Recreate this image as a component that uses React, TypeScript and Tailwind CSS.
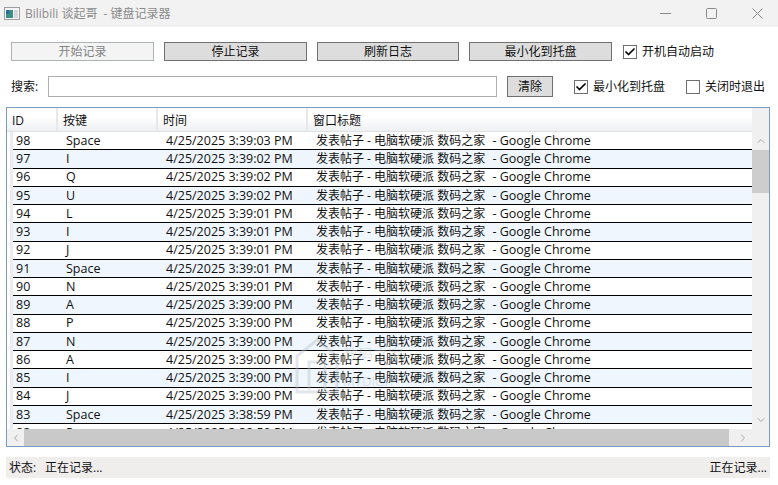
import { Check, ChevronDown, ChevronLeft, ChevronRight, ChevronUp } from 'lucide-react';

const uiFont = "font-['Open_Sans','Noto_Sans_CJK_SC',sans-serif]";

const rows = [
  { id: 98, key: 'Space', time: '4/25/2025 3:39:03 PM' },
  { id: 97, key: 'I', time: '4/25/2025 3:39:02 PM' },
  { id: 96, key: 'Q', time: '4/25/2025 3:39:02 PM' },
  { id: 95, key: 'U', time: '4/25/2025 3:39:02 PM' },
  { id: 94, key: 'L', time: '4/25/2025 3:39:01 PM' },
  { id: 93, key: 'I', time: '4/25/2025 3:39:01 PM' },
  { id: 92, key: 'J', time: '4/25/2025 3:39:01 PM' },
  { id: 91, key: 'Space', time: '4/25/2025 3:39:01 PM' },
  { id: 90, key: 'N', time: '4/25/2025 3:39:01 PM' },
  { id: 89, key: 'A', time: '4/25/2025 3:39:00 PM' },
  { id: 88, key: 'P', time: '4/25/2025 3:39:00 PM' },
  { id: 87, key: 'N', time: '4/25/2025 3:39:00 PM' },
  { id: 86, key: 'A', time: '4/25/2025 3:39:00 PM' },
  { id: 85, key: 'I', time: '4/25/2025 3:39:00 PM' },
  { id: 84, key: 'J', time: '4/25/2025 3:39:00 PM' },
  { id: 83, key: 'Space', time: '4/25/2025 3:38:59 PM' },
  { id: 82, key: 'P', time: '4/25/2025 3:38:59 PM' },
];

const ToolButton = ({ label, disabled, width }: { label: string; disabled?: boolean; width: string }) => (
  <button
    className={
      disabled
        ? `h-[19px] border border-[#adb2b5] bg-[#f4f4f4] text-[#838383] ${width}`
        : `h-[19px] border border-[#707070] bg-[#dddddd] text-[#111] ${width}`
    }
  >
    {label}
  </button>
);

const CheckItem = ({ label, checked }: { label: string; checked?: boolean }) => (
  <div className="flex items-center gap-[5px]">
    <span className="flex h-[14px] w-[14px] items-center justify-center border border-[#707070] bg-white">
      {checked && <Check className="h-[12px] w-[12px] text-black" strokeWidth={3.5} />}
    </span>
    <span>{label}</span>
  </div>
);

const HeaderCell = ({ label, width }: { label: string; width: string }) => (
  <div className={`flex h-full items-center border-r-2 border-[#e6e8ea] pt-[2px] pl-[5px] ${width}`}>{label}</div>
);

export default function App() {
  return (
    <div className={`flex h-[485px] w-[778px] flex-col overflow-hidden bg-white text-[12px] text-[#111] ${uiFont}`}>
      {/* Title bar */}
      <header className="flex h-[27px] shrink-0 items-center bg-[#f2f2f2] pl-[4px]">
        <svg width="16" height="13" viewBox="0 0 16 13" className="shrink-0">
          <rect x="0.5" y="0.5" width="15" height="12" fill="#f5f5f5" stroke="#9aa0a4" />
          <rect x="2" y="3" width="7" height="8" fill="#3c8f86" />
          <rect x="2" y="3" width="3" height="4" fill="#2f6a9a" />
          <rect x="10" y="3" width="4" height="8" fill="#d5d8da" />
        </svg>
        <span className="ml-[5px] text-[#8a8a8a]">Bilibili 谈起哥&nbsp; - 键盘记录器</span>
        <div className="ml-auto mr-[15px] flex items-center gap-[35px] text-[#8a8a8a]">
          <svg width="11" height="11" viewBox="0 0 11 11" fill="none" stroke="currentColor">
            <path d="M0 5.5H11" />
          </svg>
          <svg width="11" height="11" viewBox="0 0 11 11" fill="none" stroke="currentColor">
            <rect x="0.5" y="0.5" width="10" height="10" rx="1" />
          </svg>
          <svg width="11" height="11" viewBox="0 0 11 11" fill="none" stroke="currentColor">
            <path d="M0.5 0.5L10.5 10.5M10.5 0.5L0.5 10.5" />
          </svg>
        </div>
      </header>

      {/* Toolbar */}
      <div className="mt-[15px] flex h-[19px] shrink-0 items-center pl-[11px]">
        <div className="flex gap-[10px]">
          <ToolButton label="开始记录" width="w-[143px]" disabled />
          <ToolButton label="停止记录" width="w-[143px]" />
          <ToolButton label="刷新日志" width="w-[142px]" />
          <ToolButton label="最小化到托盘" width="w-[143px]" />
        </div>
        <div className="ml-[11px]">
          <CheckItem label="开机自动启动" checked />
        </div>
      </div>

      {/* Search */}
      <div className="mt-[15px] flex h-[21px] shrink-0 items-center pl-[11px]">
        <span className="w-[37px]">搜索:</span>
        <input className="h-full w-[449px] border border-[#abadb3] bg-white" />
        <button className="ml-[10px] h-full w-[46px] border border-[#707070] bg-[#dddddd] text-[#111]">清除</button>
        <div className="ml-[21px]">
          <CheckItem label="最小化到托盘" checked />
        </div>
        <div className="ml-[21px]">
          <CheckItem label="关闭时退出" />
        </div>
      </div>

      {/* Log table */}
      <div className="relative ml-[6px] mr-[8px] mt-[10px] flex h-[340px] shrink-0 flex-col border border-[#7a9cc0]">
        <div className="flex min-h-0 flex-1">
          <div className="flex min-w-0 flex-1 flex-col">
            <div className="flex h-[24px] shrink-0 border-b border-[#dfe1e3] bg-gradient-to-b from-white from-40% to-[#eff0f2]">
              <HeaderCell label="ID" width="w-[51px]" />
              <HeaderCell label="按键" width="w-[100px]" />
              <HeaderCell label="时间" width="w-[150px]" />
              <div className="flex h-full flex-1 items-center pt-[2px] pl-[5px]">窗口标题</div>
            </div>
            <div className="min-h-0 flex-1 overflow-hidden pl-[3px]">
              <div className="h-full border-l-[3px] border-[#ececec]">
                {rows.map((row, i) => (
                  <div
                    key={row.id}
                    className={`flex h-[18.25px] items-center border-b border-black pt-[1px] ${i % 2 ? 'bg-[#eff6fd]' : 'bg-white'}`}
                  >
                    <div className="w-[50px] pl-[3px] text-[12.5px]">{row.id}</div>
                    <div className="w-[100px] pl-[3px] text-[12.5px]">{row.key}</div>
                    <div className="w-[150px] pl-[3px] text-[12.5px]">{row.time}</div>
                    <div className="flex-1 pl-[3px]">
                      发表帖子 - 电脑软硬派 数码之家<span className="ml-[4px] text-[12.5px]"> - Google Chrome</span>
                    </div>
                  </div>
                ))}
              </div>
            </div>
          </div>

          {/* Vertical scrollbar */}
          <div className="flex w-[17px] shrink-0 flex-col bg-[#f0f0f0]">
            <div className="h-[24px] shrink-0" />
            <div className="flex h-[18px] shrink-0 items-center justify-center">
              <ChevronUp className="h-[12px] w-[12px] text-[#a6a6a6]" />
            </div>
            <div className="h-[43px] shrink-0 bg-[#cdcdcd]" />
            <div className="flex-1" />
            <div className="flex h-[18px] shrink-0 items-center justify-center">
              <ChevronDown className="h-[12px] w-[12px] text-[#a6a6a6]" />
            </div>
          </div>
        </div>

        {/* Horizontal scrollbar */}
        <div className="flex h-[17px] shrink-0 bg-[#f0f0f0]">
          <div className="flex w-[17px] items-center justify-center">
            <ChevronLeft className="h-[12px] w-[12px] text-[#a6a6a6]" />
          </div>
          <div className="w-[705px] bg-[#c9c9c9]" />
          <div className="flex w-[28px] items-center justify-center">
            <ChevronRight className="h-[12px] w-[12px] text-[#a6a6a6]" />
          </div>
        </div>

        {/* Site watermark over the list */}
        <svg
          width="120"
          height="60"
          viewBox="0 0 120 60"
          fill="none"
          className="pointer-events-none absolute left-[288px] top-[228px] opacity-40"
        >
          <path d="M2 20L22 4L42 20V56H2Z" stroke="#b8c2cc" strokeWidth="3" />
          <path d="M14 54V26H30V54" stroke="#b8c2cc" strokeWidth="3" />
          <text x="48" y="24" fontSize="15" fill="#b8c2cc">数码之家</text>
          <text x="48" y="50" fontSize="13" fill="#b8c2cc">MYDIGIT</text>
        </svg>
      </div>

      {/* Status bar */}
      <footer className="ml-[6px] mr-[8px] mt-[10px] flex h-[21px] shrink-0 items-center bg-[#f0eded] px-[3px]">
        <span className="w-[36px]">状态:</span>
        <span>正在记录...</span>
        <span className="ml-auto">正在记录...</span>
      </footer>
    </div>
  );
}
